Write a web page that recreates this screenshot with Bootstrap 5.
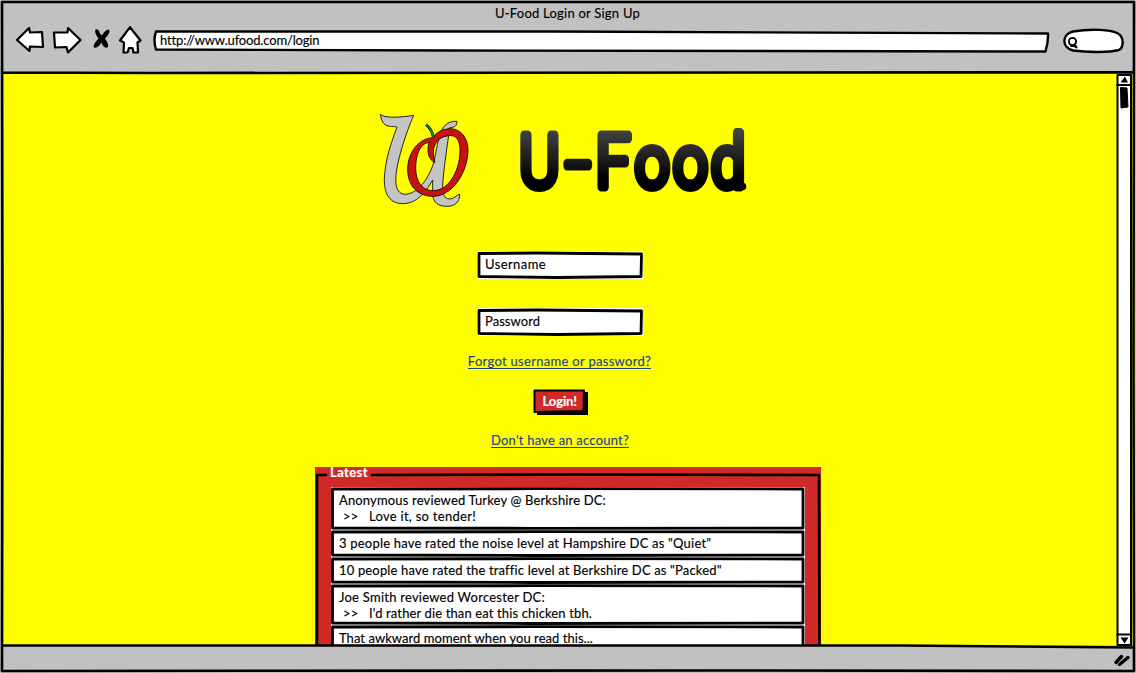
<!DOCTYPE html>
<html lang="en">
<head>
<meta charset="utf-8">
<title>U-Food Login or Sign Up</title>
<link rel="stylesheet" href="https://cdn.jsdelivr.net/npm/bootstrap@5.3.0/dist/css/bootstrap.min.css">
<style>
body{font-family:Lato,"Open Sans",sans-serif;font-size:13px;line-height:16px;color:#000;background:#fff;-webkit-text-stroke:.15px currentColor}
.window{width:1136px;height:673px;overflow:hidden;padding:1px 1px 2px;background:#c1c1c1}
.chrome-top{height:72px;flex:none}
.chrome-title{height:25px;line-height:25px;letter-spacing:.226px;padding-right:1px}
.frame{position:absolute;inset:0;width:100%;height:100%;pointer-events:none}
.ink{fill:none;stroke:#000;stroke-linejoin:round;stroke-linecap:round}
.toolbar{height:30px;padding-left:13px}
.url-bar{width:898px;height:28px;margin-left:8px;padding:6px 0 0 8px;letter-spacing:-.158px}
.search-pill{margin-left:12px}
.page{background:#ff0;flex:1;min-height:0}
.page-body{width:1115px;padding-top:32px;overflow:hidden}
.brand{margin-left:369px;height:110px}
.brand-name{margin-left:25px}
.login-form{margin-left:464px;width:190px;margin-top:36px}
.sketch-field{width:166px;height:28px;padding:5px 0 0 8px;background:#fff}
.field-user{letter-spacing:.406px}
.field-pass{letter-spacing:.053px;margin-top:29px}
.sketch-link{color:#1c4587;text-decoration:none;border-bottom:1px solid #1c4587;height:16px;line-height:16px}
.link-forgot{margin-top:17px;letter-spacing:.3px;margin-right:1px}
.link-signup{margin-top:17px;letter-spacing:.219px}
.sketch-btn{width:55px;height:26px;color:#fff!important;border:0;border-radius:0;background:none;padding:2px 0 4px 10px;font-size:13px;line-height:16px;font-weight:700;margin-top:20px;letter-spacing:-.1px}
.latest{margin-left:314px;width:506px;height:220px;margin-top:19px;background:#cf2a27;padding:20px 16px 0}
.latest-title{position:absolute;left:12px;top:-3px;padding:0 4px 0 3px;color:#fff;font-weight:700;letter-spacing:.409px}
.post{background:#fff;padding:5px 0 0 8px;height:27px;width:474px;white-space:pre}
.post-first{height:43px}
.post-tall{height:41px}
.post-body{padding-left:4px}
.quote-mark{display:inline-block;width:26px}
.scroll-col{width:18px}
.chrome-bottom{height:26px;flex:none}
.ls-a{letter-spacing:.156px}.ls-b{letter-spacing:.2px}.ls-c{letter-spacing:.16px}.ls-d{letter-spacing:.242px}.ls-e{letter-spacing:.13px}.ls-f{letter-spacing:.05px}.ls-g{letter-spacing:.28px}
</style>
</head>
<body>
<div class="window position-relative d-flex flex-column">
  <header class="chrome-top">
    <div class="chrome-title text-center">U-Food Login or Sign Up</div>
    <div class="toolbar d-flex align-items-start">
      <svg width="130" height="32" viewBox="14 23.500 130 32">
        <g class="ink" stroke-width="2.200" style="fill:#fff">
          <path d="M17 37.500 L29 25.500 L30 30 L42 29.500 L43 44.500 L30 44 L29.500 48.500 Z"/>
          <path d="M54 30 L67.500 30 L68 25.500 L80.500 37.500 L68 50 L66.500 44.500 L55 45 Z"/>
          <path d="M130 24.700 L140.500 38 L137.500 40 L138 50 L133.500 50 L132.500 45.500 L129 45.500 L127.500 50 L123.500 50 L124 40 L120 38 Z"/>
        </g>
        <path transform="translate(0 -3)" d="M95.500 30 Q98.500 29 100 34 L102 36 Q105 30 109 30 Q111 33 105 39 Q109 45 108 47.500 Q104 50 101.500 43 Q98 49 94 48 Q92 46 98.500 39 Q94 33 95.500 30Z"/>
      </svg>
      <div class="url-bar position-relative">
        <svg class="frame" viewBox="0 0 898 28"><path class="ink" stroke-width="2.400" style="fill:#fff" d="M4 5.500 L400 5.500 L896 7.500 Q896.500 15 893.500 25.500 L300 24.500 L4 23.500 Q1 14 4 5.500Z"/></svg>
        <span class="position-relative">http://www.ufood.com/login</span>
      </div>
      <svg class="search-pill" width="64" height="30" viewBox="1062 26 64 30">
        <path class="ink" stroke-width="2.400" style="fill:#fff" d="M1073 31.500 C1090 28.500 1112 29.500 1118 33.500 C1124 37 1124 47 1119 50 C1108 53 1085 52 1073 50.500 C1061 47 1062 34 1073 31.500Z"/>
        <circle class="ink" stroke-width="1.900" cx="1072.500" cy="41.500" r="3.600"/><path class="ink" stroke-width="2" d="M1071 46 H1074 L1076.500 47.500 M1074.500 44.500 L1076.500 47"/>
      </svg>
    </div>
  </header>

  <main class="page d-flex">
    <div class="page-body">
      <div class="brand d-flex">
        <svg width="110" height="110" viewBox="0 0 330 330">
          <g stroke="#000" stroke-width="2.500">
            <path fill="#c4c4c4" d="M31 28 C45 42 100 36 131 31 C118 60 98 115 86 165 C74 215 70 266 105 268 C150 266 185 205 194 160 L207 95 C216 65 232 47 261 49 C261 62 254 68 239 68 C234 110 219 200 218 245 C218 270 224 281 238 282 C252 282 258 272 269 267 C270 290 255 305 230 304 C205 304 190 292 188 270 L188 225 C165 265 140 295 100 296 C60 296 42 270 43 220 C46 160 65 110 81 66 C60 62 38 72 31 28Z"/>
            <path fill="#cb1010" fill-rule="evenodd" d="M190 98 C150 98 112 140 113 195 C114 240 140 274 190 274 C245 274 293 205 294 135 C294 95 268 70 240 71 C215 72 195 85 190 98Z M177 112 C150 115 137 150 137 190 C138 230 155 257 190 257 C240 257 272 190 270 130 C268 100 255 90 238 92 C212 93 190 112 190 142 C190 155 193 165 195 172 C175 165 170 140 177 112Z"/>
          </g>
          <path d="M168 59 C180 68 187 82 190 97" fill="none" stroke="#000" stroke-width="8"/>
          <path d="M168 59 C180 68 187 82 190 97" fill="none" stroke="#148a2c" stroke-width="5"/>
        </svg>
        <svg class="brand-name" width="255" height="110" viewBox="505 105 255 110">
          <defs><linearGradient id="coal" gradientUnits="userSpaceOnUse" x1="0" y1="130" x2="0" y2="192"><stop offset="0" stop-color="#444"/><stop offset=".8" stop-color="#000"/></linearGradient></defs>
          <g transform="scale(.85 1)" font-family="Roboto" font-weight="300" font-size="72" stroke-width="9" stroke-linejoin="round">
            <text y="187" fill="url(#coal)" stroke="url(#coal)"><tspan x="611">U</tspan><tspan x="664" font-size="108" font-weight="100" dy="13">-</tspan><tspan x="701" dy="-13">F</tspan><tspan x="747">o</tspan><tspan x="792">o</tspan><tspan x="836.500">d</tspan></text>
          </g>
          <circle cx="742.500" cy="186.500" r="3.800"/>
        </svg>
      </div>

      <form class="login-form d-flex flex-column align-items-center">
        <div class="sketch-field field-user position-relative">
          <svg class="frame" viewBox="0 0 166 28"><path class="ink" stroke-width="2.800" d="M2 2.500 L60 2 L164.500 3 L164 25.500 L80 26.500 L2 25.500Z"/></svg>
          Username
        </div>
        <div class="sketch-field field-pass position-relative">
          <svg class="frame" viewBox="0 0 166 28"><path class="ink" stroke-width="2.800" d="M2 2.500 L60 2 L164.500 3 L164 25.500 L80 26.500 L2 25.500Z"/></svg>
          Password
        </div>
        <a class="sketch-link link-forgot" href="#">Forgot username or password?</a>
        <button type="button" class="btn sketch-btn position-relative text-start">
          <svg class="frame" viewBox="0 0 55 26"><path d="M4 3 H55 V26 H4Z"/><path class="ink" stroke-width="2" style="fill:#cf2a27" d="M1.500 1.500 L51 1.500 L50.500 22 L1.500 23Z"/></svg>
          <span class="position-relative">Login!</span>
        </button>
        <a class="sketch-link link-signup" href="#">Don't have an account?</a>
      </form>

      <section class="latest position-relative">
        <svg class="frame" viewBox="0 0 506 220"><path class="ink" stroke-width="2.600" d="M11 8 H2 V200 M57 8 L260 7.500 L504 8 L504.500 200"/></svg>
        <div class="latest-title">Latest</div>
        <div class="post post-first position-relative"><svg class="frame" viewBox="0 0 474 43"><path class="ink" stroke-width="2.800" d="M1.500 2 L200 1.700 L472 2 V41 L200 41.300 L1.500 41Z"/></svg><div class="ls-a">Anonymous reviewed Turkey @ Berkshire DC:</div><div class="post-body ls-g"><span class="quote-mark">&gt;&gt; </span>Love it, so tender!</div></div>
        <div class="post position-relative"><svg class="frame" viewBox="0 0 474 27"><path class="ink" stroke-width="2.800" d="M1.500 2 L200 1.700 L472 2 V25 L200 25.500 L1.500 25Z"/></svg><div class="ls-b">3 people have rated the noise level at Hampshire DC as "Quiet"</div></div>
        <div class="post position-relative"><svg class="frame" viewBox="0 0 474 27"><path class="ink" stroke-width="2.800" d="M1.500 2 L200 1.700 L472 2 V25 L200 25.500 L1.500 25Z"/></svg><div class="ls-c">10 people have rated the traffic level at Berkshire DC as "Packed"</div></div>
        <div class="post post-tall position-relative"><svg class="frame" viewBox="0 0 474 41"><path class="ink" stroke-width="2.800" d="M1.500 2 L200 1.700 L472 2 V39 L200 39.500 L1.500 39Z"/></svg><div class="ls-d">Joe Smith reviewed Worcester DC:</div><div class="post-body ls-e"><span class="quote-mark">&gt;&gt; </span>I'd rather die than eat this chicken tbh.</div></div>
        <div class="post position-relative"><svg class="frame" viewBox="0 0 474 27"><path class="ink" stroke-width="2.800" d="M1.500 2 L200 1.700 L472 2 V25 L200 25.500 L1.500 25Z"/></svg><div class="ls-f">That awkward moment when you read this...</div></div>
      </section>
    </div>
    <svg class="scroll-col" width="18" height="573" viewBox="1116 73 18 573">
      <path class="ink" stroke-width="2" style="fill:#fff" d="M1117.500 75 H1131 V645 H1117.500Z"/>
      <path class="ink" stroke-width="2" d="M1117 85 H1131 M1117 634.500 H1131"/>
      <path d="M1120.500 82.500 L1125 76.500 L1128 82.500Z M1120.500 637.500 H1128.500 L1124.500 643.500Z"/>
      <path d="M1120.500 87.500 L1127 88 L1128 107 L1121 108Z" stroke="#000" stroke-linejoin="round"/>
    </svg>
  </main>

  <footer class="chrome-bottom"></footer>
  <svg class="frame" viewBox="0 0 1136 673">
    <path d="M1 646 L560 646 L1134 648 V671 H1Z" fill="#c1c1c1"/>
    <path class="ink" stroke-width="2.600" d="M2 2 H1134 L1133.500 350 L1134 671 L700 670.500 L2 671 L2.500 330Z M2 72.500 L150 73 L1134 72.300 M2 645.500 L560 645.500 L900 645.500 L1134 647.500"/>
    <path class="ink" stroke-width="3.400" d="M1116 662.500 L1121.500 656.500 M1119.500 664.500 L1128 657.500"/>
  </svg>
</div>
<script src="https://cdn.jsdelivr.net/npm/bootstrap@5.3.0/dist/js/bootstrap.bundle.min.js"></script>
</body>
</html>
